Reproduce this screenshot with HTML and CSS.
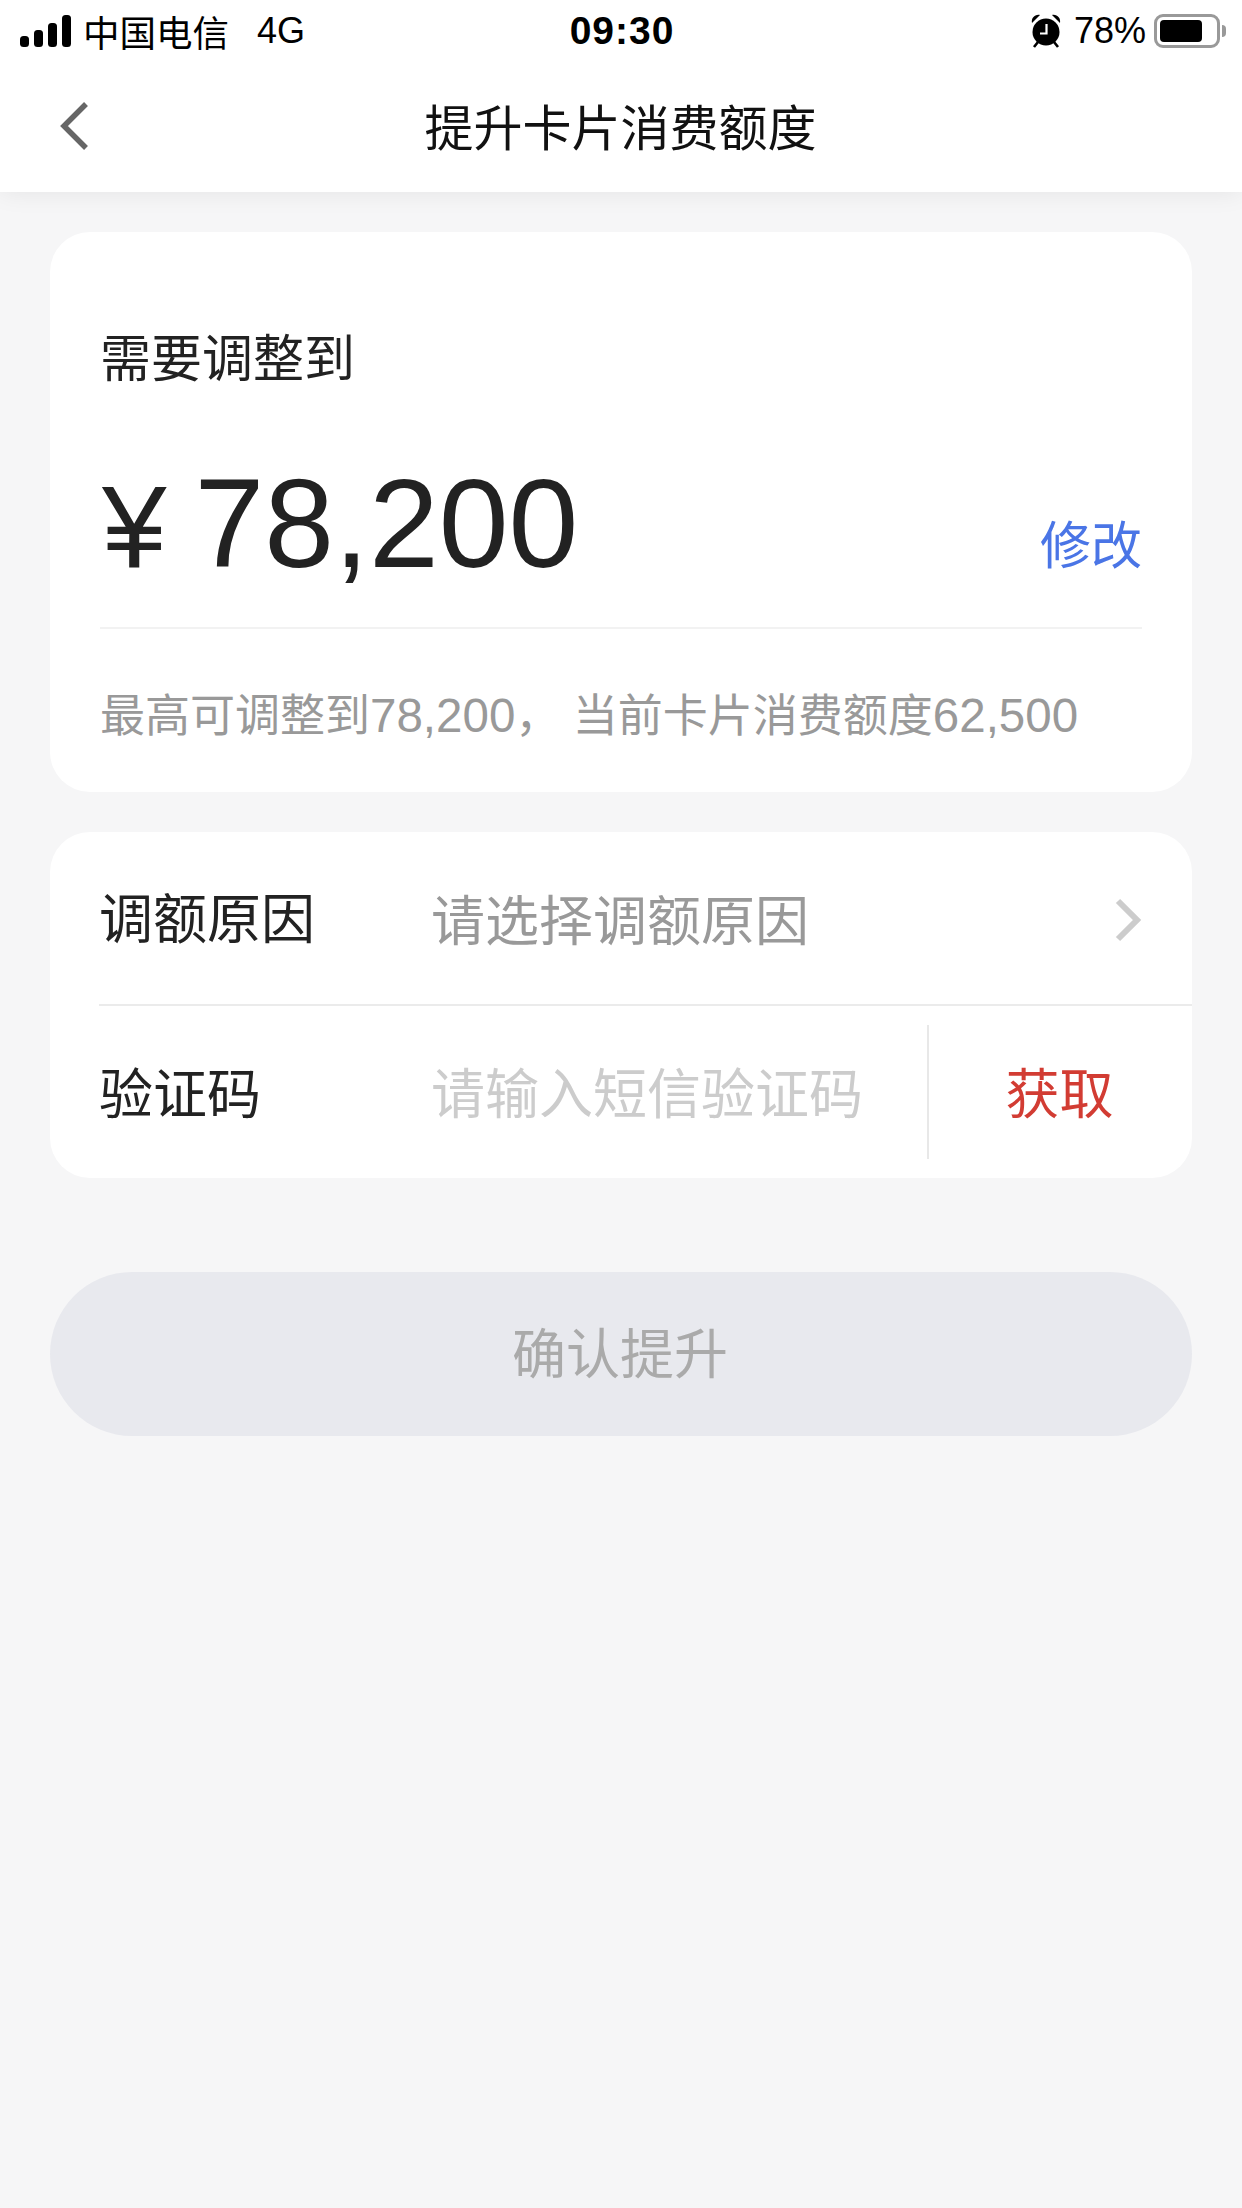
FILE: index.html
```html
<!DOCTYPE html>
<html lang="zh-CN">
<head>
  <meta charset="UTF-8" />
  <meta name="viewport" content="width=device-width, initial-scale=1" />
  <title>提升卡片消费额度</title>
  <link rel="stylesheet" href="styles.css">
</head>
<body>

  <header class="top">
    <div class="status-bar">
      <div class="status-left">
        <svg class="signal" width="52" height="32" viewBox="0 0 52 32" aria-hidden="true">
          <rect x="0" y="21" width="9" height="11" rx="3.5" />
          <rect x="14" y="15" width="9" height="17" rx="3.5" />
          <rect x="28" y="8" width="9" height="24" rx="3.5" />
          <rect x="42" y="0" width="9" height="32" rx="3.5" />
        </svg>
        <span class="carrier">中国电信</span>
        <span class="network">4G</span>
      </div>
      <div class="time">09:30</div>
      <div class="status-right">
        <svg class="alarm" width="30" height="34" viewBox="0 0 30 34" aria-hidden="true">
          <path d="M1 9 C0 4 4 0 9 1 Z M29 9 C30 4 26 0 21 1 Z" />
          <circle cx="15" cy="18" r="13.5" />
          <path d="M15.5 10 V19.5 H9" fill="none" stroke="#fff" stroke-width="2.2" />
          <path d="M7 28 L3 33 M23 28 L27 33" fill="none" stroke="#000" stroke-width="2.6" />
        </svg>
        <span class="percent">78%</span>
        <div class="battery"><div class="battery-fill"></div></div>
        <div class="battery-tip"></div>
      </div>
    </div>
    <nav class="nav-bar">
      <svg class="back" width="30" height="50" viewBox="0 0 30 50" aria-hidden="true">
        <path d="M27 3 L5 25 L27 47" fill="none" stroke="#666" stroke-width="5.5" />
      </svg>
      <h1 class="nav-title">提升卡片消费额度</h1>
    </nav>
  </header>

  <main class="content">
    <section class="card amount-card">
      <p class="amount-label">需要调整到</p>
      <div class="amount-row">
        <span class="amount"><span class="currency">¥</span>78,200</span>
        <a class="edit-link">修改</a>
      </div>
      <p class="amount-note">最高可调整到<span class="num">78,200</span>，&nbsp;当前卡片消费额度<span class="num">62,500</span></p>
    </section>

    <section class="card form-card">
      <div class="form-row reason-row">
        <span class="form-label">调额原因</span>
        <span class="form-value">请选择调额原因</span>
        <svg class="arrow" width="28" height="44" viewBox="0 0 28 44" aria-hidden="true">
          <path d="M4 3 L23 22 L4 41" fill="none" stroke="#ccc" stroke-width="6" />
        </svg>
      </div>
      <div class="form-row code-row">
        <span class="form-label">验证码</span>
        <span class="form-value placeholder">请输入短信验证码</span>
        <span class="get-code">获取</span>
      </div>
    </section>

    <button class="submit" type="button">确认提升</button>
  </main>

</body>
</html>
```

FILE: styles.css
```css
* {
  box-sizing: border-box;
}

body {
  margin: 0;
  min-height: 2208px;
  background-color: #f6f6f7;
  font-family: "Liberation Sans", "Noto Sans CJK SC", sans-serif;
  color: #222;
}

p, h1 {
  margin: 0;
}

/* status bar + nav */
.top {
  background: #fff;
  height: 192px;
  box-shadow: 0 0 24px rgb(0 0 0 / 0.08);
}

.status-bar {
  height: 62px;
  padding: 0 16px 0 20px;
  display: grid;
  grid-template-columns: 1fr auto 1fr;
  align-items: center;
  color: #000;
  font-size: 36px;
}

.status-left, .status-right {
  display: flex;
  align-items: center;
}

.status-right {
  justify-content: flex-end;
}

.signal {
  margin-right: 11px;
}

.carrier {
  font-size: 36.5px;
}

.network {
  margin-left: 28px;
}

.time {
  font-weight: 700;
  font-size: 39px;
  letter-spacing: 1px;
  margin-left: -2px;
}

.alarm {
  margin-right: 13px;
}

.percent {
  margin-right: 8px;
}

.battery {
  width: 66px;
  height: 34px;
  border: 3px solid #999;
  border-radius: 9px;
  padding: 3px;
}

.battery-fill {
  width: 42px;
  height: 100%;
  background: #000;
  border-radius: 4px;
}

.battery-tip {
  width: 4px;
  height: 12px;
  margin-left: 2px;
  background: #999;
  border-radius: 0 4px 4px 0;
}

.nav-bar {
  height: 130px;
  padding: 0 60px 6px 59px;
  display: grid;
  grid-template-columns: 1fr auto 1fr;
  align-items: center;
}

.back {
  margin-top: 4px;
}

.nav-title {
  font-size: 49px;
  font-weight: 400;
  color: #111;
}

/* cards */
.content {
  padding: 40px 50px 0;
}

.card {
  background: #fff;
  border-radius: 40px;
}

.amount-card {
  height: 560px;
  padding: 103px 50px 0;
  margin-bottom: 40px;
}

.amount-label {
  font-size: 51px;
  line-height: 50px;
}

.amount-row {
  height: 204px;
  margin-top: 40px;
  display: flex;
  justify-content: space-between;
  align-items: center;
  border-bottom: 2px solid #f2f2f2;
}

.amount {
  font-size: 125.5px;
  line-height: 124px;
  margin-bottom: 2px;
}

.currency {
  font-size: 116px;
  margin: 0 28px 0 2px;
}

.edit-link {
  font-size: 51px;
  color: #4a75e6;
  margin-top: 32px;
}

.amount-note {
  margin-top: 59px;
  font-size: 45px;
  line-height: 56px;
  color: #999;
}

.num {
  font-size: 47.5px;
}

.form-card {
  height: 346px;
}

.form-row {
  display: flex;
  align-items: center;
  margin-left: 49px;
  font-size: 54px;
}

.reason-row {
  height: 174px;
  padding: 0 50px 2px 0;
  border-bottom: 2px solid #ebebeb;
}

.arrow {
  margin-top: 5px;
}

.code-row {
  height: 172px;
}

.form-label {
  width: 332px;
  padding-bottom: 4px;
}

.form-value {
  flex: 1;
  color: #999;
}

.code-row .form-value {
  padding-bottom: 4px;
}

.placeholder {
  color: #ccc;
}

.get-code {
  width: 265px;
  height: 134px;
  padding: 0 2px 4px 0;
  display: flex;
  align-items: center;
  justify-content: center;
  border-left: 2px solid #e8e8e8;
  color: #d23c33;
}

.submit {
  display: block;
  width: 100%;
  height: 164px;
  margin-top: 94px;
  padding: 0 2px 8px 0;
  border: 0;
  border-radius: 82px;
  background: #e8e9ee;
  color: #aaa;
  font-family: inherit;
  font-size: 54px;
}
```
